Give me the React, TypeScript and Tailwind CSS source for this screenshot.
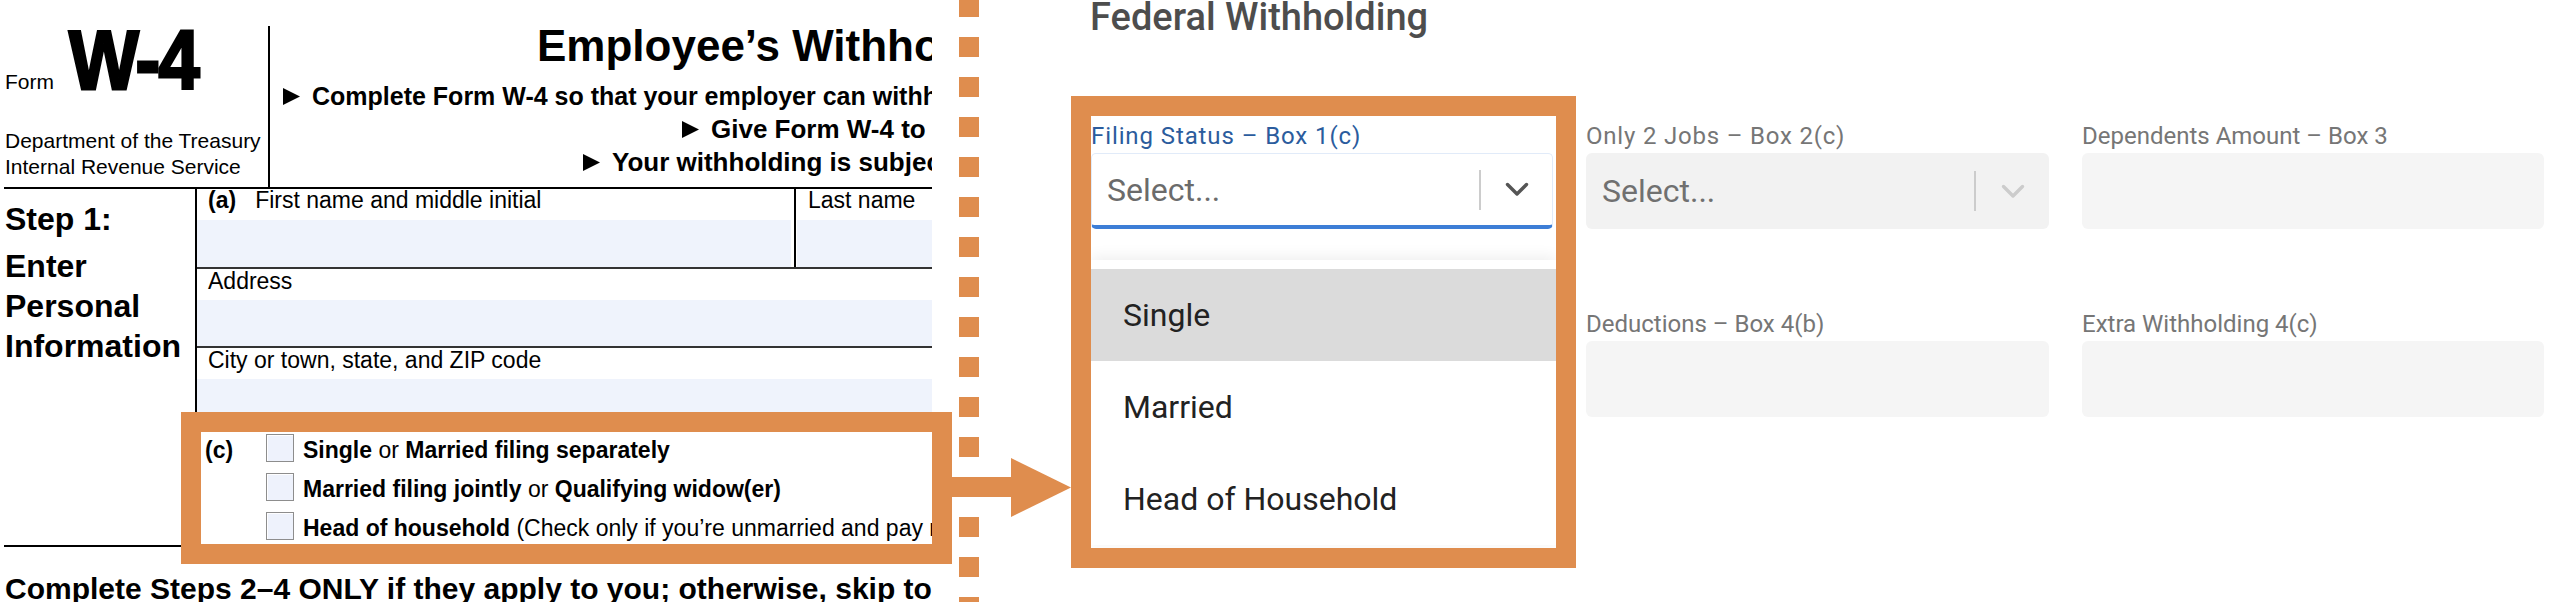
import React from "react";

function Tri() {
  return (
    <svg width="17" height="17" viewBox="0 0 17 17" className="mr-[12px] shrink-0">
      <polygon points="0,0 17,8.5 0,17" fill="#000" />
    </svg>
  );
}

function Chevron({ color }: { color: string }) {
  return (
    <svg width="24" height="15" viewBox="0 0 24 15">
      <polyline
        points="2.5,2.5 12,12 21.5,2.5"
        fill="none"
        stroke={color}
        strokeWidth="3.4"
        strokeLinecap="round"
        strokeLinejoin="round"
      />
    </svg>
  );
}

function Checkbox() {
  return (
    <div className="h-[28px] w-[28px] shrink-0 border-[1.5px] border-[#8d8d8d] bg-[#eef2fc] shadow-[inset_1px_1px_0_rgba(255,255,255,0.9)]" />
  );
}

function W4Form() {
  return (
    <div className="w-[932px] shrink-0 overflow-hidden font-['Liberation_Sans',Arial,sans-serif] text-black">
      {/* Header */}
      <div className="flex h-[187px]">
        <div className="w-[268px] shrink-0 pl-[5px] pt-[19px]">
          <div className="flex h-[82px] items-baseline">
            <span className="text-[21px] leading-none">Form</span>
            <span className="ml-[15px] origin-left scale-x-[0.88] text-[84px] font-bold leading-[82px] tracking-[-2px] [-webkit-text-stroke:3px_#000]">
              W-4
            </span>
          </div>
          <div className="mt-[27px] whitespace-nowrap text-[21px] leading-[26px]">
            <div>Department of the Treasury</div>
            <div>Internal Revenue Service</div>
          </div>
        </div>
        <div className="mt-[26px] w-[2px] shrink-0 bg-black" />
        <div className="min-w-0 flex-1 whitespace-nowrap">
          <div className="pl-[267px] pt-[24px] text-[44px] font-bold leading-[44px]">
            Employee’s Withholding Certificate
          </div>
          <div className="mt-[12px] flex items-baseline pl-[13px] text-[25px] font-bold leading-[33px]">
            <Tri />
            <span>Complete Form W-4 so that your employer can withhold the correct federal income tax from your pay.</span>
          </div>
          <div className="flex items-baseline pl-[412px] text-[26px] font-bold leading-[33px]">
            <Tri />
            <span>Give Form W-4 to your employer.</span>
          </div>
          <div className="flex items-baseline pl-[313px] text-[26px] font-bold leading-[33px]">
            <Tri />
            <span>Your withholding is subject to review by the IRS.</span>
          </div>
        </div>
      </div>
      <div className="ml-[4px] h-[2px] bg-black" />

      {/* Step 1 */}
      <div className="flex h-[356px]">
        <div className="w-[195px] shrink-0 pl-[5px] pt-[10px] text-[32px] font-bold leading-[40px]">
          <div>Step 1:</div>
          <div className="mt-[7px]">
            <div>Enter</div>
            <div>Personal</div>
            <div>Information</div>
          </div>
        </div>
        <div className="w-[2px] shrink-0 bg-black" />
        <div className="min-w-0 flex-1 whitespace-nowrap text-[23px] leading-[20px]">
          {/* row a */}
          <div className="flex h-[78px]">
            <div className="flex w-[597px] shrink-0 flex-col">
              <div className="h-[31px] pl-[11px] pt-[1px]">
                <span className="font-bold">(a)</span>
                <span className="ml-[19px]">First name and middle initial</span>
              </div>
              <div className="mr-[3px] h-[47px] bg-[#eff3fc]" />
            </div>
            <div className="w-[2px] shrink-0 bg-black" />
            <div className="flex min-w-0 flex-1 flex-col">
              <div className="h-[31px] pl-[12px] pt-[1px]">Last name</div>
              <div className="ml-[1px] h-[47px] bg-[#eff3fc]" />
            </div>
          </div>
          <div className="h-[2px] bg-[#333]" />
          {/* address */}
          <div className="h-[31px] pl-[11px] pt-[2px]">Address</div>
          <div className="h-[46px] bg-[#eff3fc]" />
          <div className="h-[2px] bg-[#333]" />
          {/* city */}
          <div className="h-[31px] pl-[11px] pt-[2px]">City or town, state, and ZIP code</div>
          <div className="h-[46px] bg-[#eff3fc]" />
          <div className="h-[2px] bg-[#333]" />
          {/* (c) */}
          <div className="h-[118px] pt-[7px] leading-[28px]">
            <div className="flex flex-col gap-[11px]">
              <div className="flex h-[28px] items-center">
                <span className="w-[69px] shrink-0 pl-[8px] pt-[3px] font-bold">(c)</span>
                <Checkbox />
                <span className="ml-[9px] pt-[3px]">
                  <span className="font-bold">Single</span> or{" "}
                  <span className="font-bold">Married filing separately</span>
                </span>
              </div>
              <div className="flex h-[28px] items-center">
                <span className="w-[69px] shrink-0" />
                <Checkbox />
                <span className="ml-[9px] pt-[3px]">
                  <span className="font-bold">Married filing jointly</span> or{" "}
                  <span className="font-bold">Qualifying widow(er)</span>
                </span>
              </div>
              <div className="flex h-[28px] items-center">
                <span className="w-[69px] shrink-0" />
                <Checkbox />
                <span className="ml-[9px] pt-[3px]">
                  <span className="font-bold">Head of household</span> (Check only if you’re unmarried and pay more than half the costs of keeping up a home for yourself and a qualifying individual.)
                </span>
              </div>
            </div>
          </div>
        </div>
      </div>
      <div className="ml-[4px] h-[2px] bg-black" />
      <div className="mt-[24px] whitespace-nowrap pl-[5px] text-[30px] font-bold leading-[36px]">
        Complete Steps 2–4 ONLY if they apply to you; otherwise, skip to Step 5. See page 2 for more information on each step.
      </div>
    </div>
  );
}

function FederalPanel() {
  const gray = "whitespace-nowrap text-[24px] leading-[28px] text-[#767676]";
  return (
    <div className="min-w-0 flex-1 pl-[112px] font-['Roboto','Noto_Sans',sans-serif]">
      <div className="-ml-[1px] -mt-[2px] whitespace-nowrap text-[38px] font-medium leading-[38px] text-[#4d4d4d]">
        Federal Withholding
      </div>
      <div className="mt-[86px] grid grid-cols-[462px_463px_462px] gap-x-[33px] gap-y-[81px]">
        {/* col 1 */}
        <div className="relative">
          <div className="whitespace-nowrap text-[24px] leading-[28px] tracking-[0.9px] text-[#2b5c9d]">
            Filing Status – Box 1(c)
          </div>
          <div className="mt-[3px] flex h-[76px] items-center rounded-[5px] border border-b-4 border-[#e1ebf9] border-b-[#3d7ed6] bg-white">
            <span className="flex-1 pl-[15px] text-[32px] text-[#6b6b6b]">Select...</span>
            <div className="h-[40px] w-[2px] bg-[#cccccc]" />
            <div className="flex w-[71px] justify-center">
              <Chevron color="#555555" />
            </div>
          </div>
          <div className="absolute left-0 top-full mt-[31px] w-[465px] bg-white pt-[9px] shadow-[0_-3px_14px_rgba(0,0,0,0.07)]">
            <div className="flex h-[92px] items-center bg-[#dbdbdb] pl-[32px] text-[32px] text-[#222222]">Single</div>
            <div className="flex h-[92px] items-center pl-[32px] text-[32px] text-[#222222]">Married</div>
            <div className="flex h-[92px] items-center pl-[32px] text-[32px] text-[#222222]">Head of Household</div>
          </div>
        </div>
        {/* col 2 */}
        <div>
          <div className="whitespace-nowrap text-[24px] leading-[28px] tracking-[0.8px] text-[#767676]">
            Only 2 Jobs – Box 2(c)
          </div>
          <div className="mt-[3px] flex h-[76px] items-center rounded-[6px] bg-[#f2f2f2]">
            <span className="flex-1 pl-[16px] text-[32px] text-[#707070]">Select...</span>
            <div className="h-[40px] w-[2px] bg-[#cccccc]" />
            <div className="flex w-[73px] justify-center">
              <Chevron color="#cccccc" />
            </div>
          </div>
        </div>
        {/* col 3 */}
        <div>
          <div className={gray}>Dependents Amount – Box 3</div>
          <div className="mt-[3px] h-[76px] rounded-[6px] bg-[#f5f5f5]" />
        </div>
        {/* row 2 */}
        <div />
        <div>
          <div className={gray}>Deductions – Box 4(b)</div>
          <div className="mt-[3px] h-[76px] rounded-[6px] bg-[#f5f5f5]" />
        </div>
        <div>
          <div className={gray}>Extra Withholding 4(c)</div>
          <div className="mt-[3px] h-[76px] rounded-[6px] bg-[#f5f5f5]" />
        </div>
      </div>
    </div>
  );
}

export default function App() {
  const dashes = Array.from({ length: 16 });
  return (
    <div className="relative flex h-[602px] w-[2556px] overflow-hidden bg-white">
      <W4Form />
      <div className="-mt-[3px] ml-[27px] flex w-[20px] shrink-0 flex-col gap-[20px]">
        {dashes.map((_, i) => (
          <div key={i} className="h-[20px] shrink-0 bg-[#df8d4e]" />
        ))}
      </div>
      <FederalPanel />

      {/* highlight overlays */}
      <div className="pointer-events-none absolute left-[181px] top-[412px] h-[152px] w-[771px] border-[20px] border-[#df8d4e]" />
      <div className="pointer-events-none absolute left-[1071px] top-[96px] h-[472px] w-[505px] border-[20px] border-[#df8d4e]" />
      <svg className="pointer-events-none absolute left-[952px] top-[458px]" width="119" height="59" viewBox="0 0 119 59">
        <rect x="0" y="19" width="60" height="20" fill="#df8d4e" />
        <polygon points="59,0 119,29.5 59,59" fill="#df8d4e" />
      </svg>
    </div>
  );
}
